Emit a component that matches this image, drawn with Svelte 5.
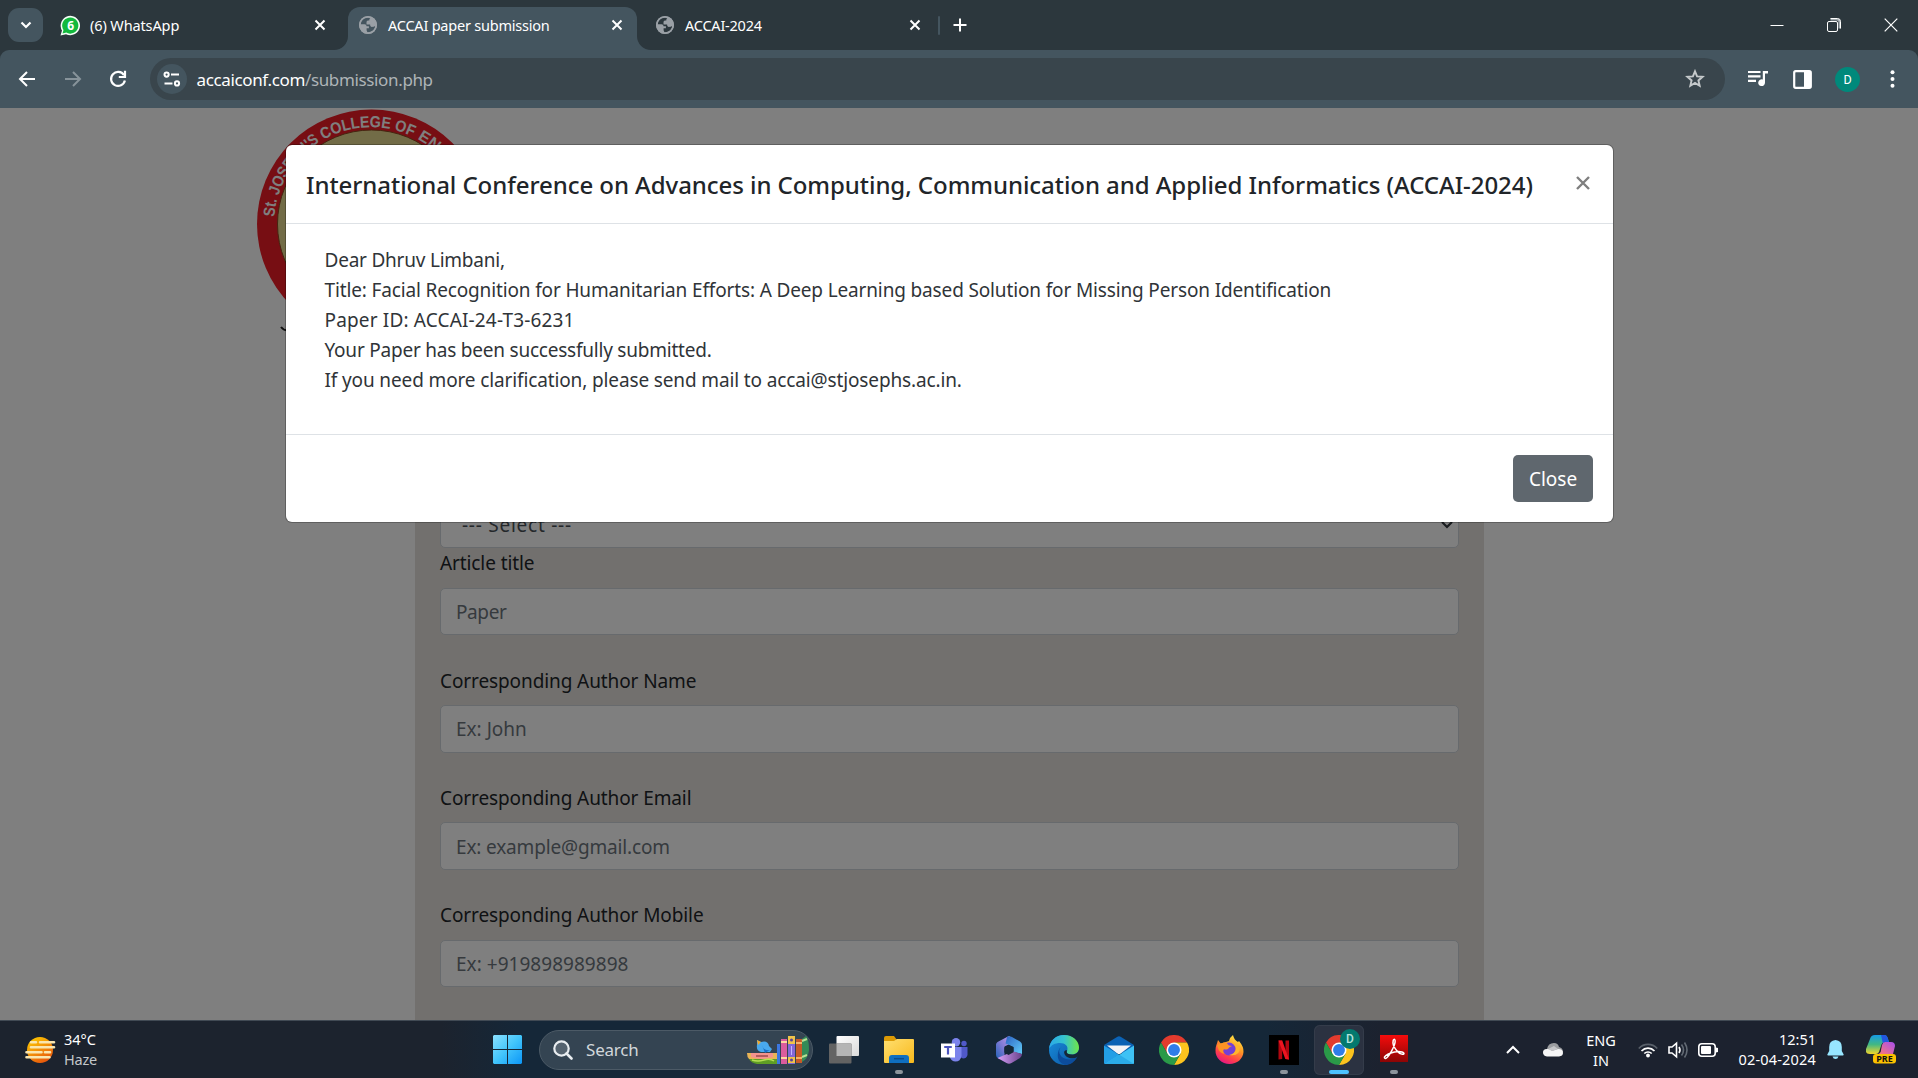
<script>
  const fields = [
    { label: 'Article title', hint: 'Paper' },
    { label: 'Corresponding Author Name', hint: 'Ex: John' },
    { label: 'Corresponding Author Email', hint: 'Ex: example@gmail.com' },
    { label: 'Corresponding Author Mobile', hint: 'Ex: +919898989898' }
  ];
  const message = [
    'Dear Dhruv Limbani,',
    'Title: Facial Recognition for Humanitarian Efforts: A Deep Learning based Solution for Missing Person Identification',
    'Paper ID: ACCAI-24-T3-6231',
    'Your Paper has been successfully submitted.',
    'If you need more clarification, please send mail to accai@stjosephs.ac.in.'
  ];
</script>

{#snippet cross()}
  <svg class="cross" width="12" height="12" viewBox="0 0 12 12"><path d="M1.5 1.5l9 9M10.5 1.5l-9 9" stroke="#fff" stroke-width="2" /></svg>
{/snippet}

{#snippet globe()}
  <svg class="favicon" width="20" height="20" viewBox="0 0 20 20">
    <circle cx="10" cy="10" r="9" fill="#9aa0a6" />
    <path d="M8.5 2.6C5 3.200 2.700 6 2.600 9.300H6.500c1.300 0 2 .9 2 2h2.400v1.900H8.600v2.100l.9 2.100c4.300.2 7.600-2.900 7.900-6.600-1 .9-2 1.100-3.400 1.100-1.300 0-1.900-.7-1.900-2.300H8.500V7.400c0-1.400.8-2 2.200-2h.6c0-1.300.5-2.200 1.300-2.700-1.300-.4-2.700-.4-4.100-.1z" fill="var(--hole)" />
    <circle cx="10" cy="10" r="8.200" fill="none" stroke="#9aa0a6" stroke-width="1.700" />
  </svg>
{/snippet}

{#snippet chrome()}
  <svg width="30" height="30" viewBox="0 0 48 48">
    <path d="M24 12h20.800A24 24 0 0 0 3.200 12l10.400 18z" fill="#e33b2e" />
    <path d="M34.400 30L24 48A24 24 0 0 0 44.800 12H24z" fill="#fcc31e" />
    <path d="M13.600 30L3.200 12A24 24 0 0 0 24 48l10.400-18z" fill="#2a9a48" />
    <circle cx="24" cy="24" r="12" fill="#fff" /><circle cx="24" cy="24" r="9.500" fill="#2f7de9" />
  </svg>
{/snippet}

<div class="screen">
  <div class="tabs">
    <div class="tabsearch"><svg width="12" height="8" viewBox="0 0 12 8"><path d="M1.500 1.500L6 6l4.500-4.500" fill="none" stroke="#fff" stroke-width="2.200" /></svg></div>
    <div class="tab first">
      <svg class="favicon" width="21" height="21" viewBox="0 0 21 21"><path d="M.5 20.500l1.500-5A9.700 9.700 0 1 1 6 19.200z" fill="#f4fff6" /><path d="M2.500 18.600l1-3.600A8.100 8.100 0 1 1 6.300 17.600z" fill="#12b93d" /><text x="10.700" y="15" text-anchor="middle" class="wa">6</text></svg>
      <span class="t1">(6) WhatsApp</span>{@render cross()}
    </div>
    <div class="tab active">
      <svg class="flare left" width="14" height="14" viewBox="0 0 14 14"><path d="M14 0v14H0A14 14 0 0 0 14 0z" fill="#44555f" /></svg>
      {@render globe()}<span class="t2">ACCAI paper submission</span>{@render cross()}
      <svg class="flare right" width="14" height="14" viewBox="0 0 14 14"><path d="M0 0v14h14A14 14 0 0 1 0 0z" fill="#44555f" /></svg>
    </div>
    <div class="tab last">{@render globe()}<span class="t3">ACCAI-2024</span>{@render cross()}</div>
    <i class="sep"></i>
    <svg class="plus" width="14" height="14" viewBox="0 0 14 14"><path d="M7 .5v13M.5 7h13" stroke="#fff" stroke-width="2" /></svg>
    <div class="controls">
      <svg width="14" height="14" viewBox="0 0 14 14"><path d="M.5 7.500h13" stroke="#fff" /></svg>
      <svg width="14" height="14" viewBox="0 0 14 14" fill="none" stroke="#fff"><path d="M3.500 1.500h6.500a2.500 2.500 0 0 1 2.500 2.500v6.500" stroke="#a5adb1" stroke-width="2" /><path d="M3.500.5h7a3 3 0 0 1 3 3v7" /><rect x=".5" y="3.500" width="10" height="10" rx="1.500" fill="#2c373d" /></svg>
      <svg width="14" height="14" viewBox="0 0 14 14"><path d="M.7.7l12.600 12.600M13.300.7L.7 13.300" stroke="#fff" stroke-width="1.200" /></svg>
    </div>
  </div>

  <div class="toolwrap">
  <div class="toolbar">
    <svg class="nav" width="18" height="18" viewBox="0 0 18 18" fill="none" stroke="#fff" stroke-width="2"><path d="M17 9H2.500M9 2L2 9l7 7" /></svg>
    <svg class="nav" width="18" height="18" viewBox="0 0 18 18" fill="none" stroke="#87939a" stroke-width="2"><path d="M1 9h14.500M9 2l7 7-7 7" /></svg>
    <svg class="nav" width="18" height="18" viewBox="0 0 18 18" fill="none" stroke="#fff" stroke-width="2.200"><path d="M15 5.200A7 7 0 1 0 15.900 10.500" /><path d="M16 .8V7H9.800" /></svg>
    <div class="omnibox">
      <span class="site"><svg width="18" height="16" viewBox="0 0 18 16" fill="none" stroke="#fff" stroke-width="2"><circle cx="3.600" cy="3.600" r="2.100" /><path d="M8 3.600h8M1.500 12.400h8" /><circle cx="14" cy="12.400" r="2.100" /></svg></span>
      <span class="url"><b>accaiconf.com</b>/submission.php</span>
      <svg class="star" width="20" height="20" viewBox="0 0 24 24"><path d="M12 2.800l2.500 6.100 6.600.5-5 4.300 1.500 6.500-5.600-3.500-5.600 3.500 1.500-6.500-5-4.300 6.600-.5z" fill="none" stroke="#c5c9cb" stroke-width="2.300" /></svg>
    </div>
    <div class="tools">
      <svg width="20" height="18" viewBox="0 0 20 18"><path d="M0 2h12.500M0 6.400h12.500M0 10.800h8" stroke="#fff" stroke-width="2.200" /><path d="M14.800 1h5.200v2.600h-3v9a3.400 3.400 0 1 1-2.200-3.100z" fill="#fff" /></svg>
      <svg width="19" height="19" viewBox="0 0 19 19"><rect x="1.200" y="1.200" width="16.600" height="16.600" rx="1.500" fill="none" stroke="#fff" stroke-width="2.200" /><path d="M11 1h7v17h-7z" fill="#fff" /></svg>
      <span class="avatar">D</span>
      <svg width="5" height="18" viewBox="0 0 5 18" fill="#fff"><circle cx="2.500" cy="2.200" r="2" /><circle cx="2.500" cy="9" r="2" /><circle cx="2.500" cy="15.800" r="2" /></svg>
    </div>
  </div>
  </div>

  <main class="viewport">
    <div class="page">
      <header>
        <svg class="seal" width="260" height="240" viewBox="0 0 260 240">
          <circle cx="114.500" cy="116" r="114.500" fill="#ee1c26" /><circle cx="114.500" cy="116" r="94" fill="#e5d98f" stroke="#8a4a20" stroke-width="1" />
          <path id="arc" d="M17.200 110A97 97 0 0 1 210.800 110" fill="none" />
          <text class="rimtext"><textPath href="#arc" startOffset="1" textLength="91" lengthAdjust="spacingAndGlyphs">St. JOSEPH'S</textPath></text>
          <text class="rimtext"><textPath href="#arc" startOffset="96" textLength="93" lengthAdjust="spacingAndGlyphs">COLLEGE OF</textPath></text>
          <text class="rimtext"><textPath href="#arc" startOffset="194" textLength="35" lengthAdjust="spacingAndGlyphs">ENG</textPath></text>
          <path d="M24 219q3 4 8 3" fill="none" stroke="#222" stroke-width="2" />
        </svg>
      </header>
      <form class="panel">
        <div class="input select"><span>--- Select ---</span><svg width="12" height="8" viewBox="0 0 12 8"><path d="M1 1l5 5 5-5" fill="none" stroke="#343a40" stroke-width="2.200" /></svg></div>
        {#each fields as f, i}
          <div class="group"><div class="label">{f.label}</div><div class="input f{i}">{f.hint}</div></div>
        {/each}
      </form>
    </div>
    <div class="backdrop">
      <section class="modal">
        <div class="head"><h5>International Conference on Advances in Computing, Communication and Applied Informatics (ACCAI-2024)</h5>
          <svg width="14" height="14" viewBox="0 0 14 14"><path d="M1 1l12 12M13 1L1 13" stroke="#7f7f7f" stroke-width="2.400" /></svg></div>
        <div class="body">{#each message as line, i}<p class="m{i}">{line}</p>{/each}</div>
        <div class="foot"><button>Close</button></div>
      </section>
    </div>
  </main>

  <footer class="taskbar">
    <div class="weather">
      <svg width="31" height="28" viewBox="0 0 31 28"><defs><linearGradient id="sun" x1="0" y1="0" x2=".6" y2="1"><stop offset="0" stop-color="#ffd400" /><stop offset="1" stop-color="#e8590c" /></linearGradient></defs><circle cx="15" cy="14" r="13" fill="url(#sun)" /><path d="M6 6.300h5M15 6.300h14M6 11.300h23M1.500 16.300h15M20 16.300h5M1.500 21.300h23" stroke="#fae6ae" stroke-width="2.600" stroke-linecap="round" /></svg>
      <div class="temp"><p>34°C</p><p class="dim">Haze</p></div>
    </div>
    <svg class="start" width="29" height="29" viewBox="0 0 29 29"><defs><linearGradient id="win" x1="0" y1="0" x2="1" y2="1"><stop offset="0" stop-color="#8be1ff" /><stop offset=".5" stop-color="#42c5fb" /><stop offset="1" stop-color="#0c96f7" /></linearGradient></defs><path d="M1 0h13v14H0V1zM15 0h13l1 1v13H15zM0 15h14v14H1l-1-1zM15 15h14v13l-1 1H15z" fill="url(#win)" /></svg>
    <div class="search">
      <svg width="20" height="20" viewBox="0 0 20 20" fill="none" stroke="#e9edf0" stroke-width="2.200"><circle cx="8.500" cy="8.500" r="7.200" fill="#55636f" /><path d="M13.500 13.500l5 5" stroke-linecap="round" stroke-width="2.600" /></svg>
      <span>Search</span>
      <svg class="books" width="62" height="29" viewBox="0 0 62 29">
        <path d="M0 17h30v6H2q-2-2-2-6z" fill="#e9b456" /><path d="M4 17h22v4q-11 4-22 0z" fill="#f4938c" /><path d="M9 19h12v2H9z" fill="#b25c5c" />
        <path d="M2 23h28v5H10q-6-1-8-5z" fill="#5f9e24" /><path d="M5 24q6 2 12 0t10 1" stroke="#b5df54" fill="none" stroke-width="1.500" />
        <path d="M10 4l4 2q7-2 8 4l3 3-2 3H14q-5-1-4-7z" fill="#49a9ee" /><path d="M10 4l4 2-3 3z" fill="#f2a82b" /><path d="M15 9q1 6 8 5l-5 3z" fill="#1b6fc7" />
        <path d="M30 8h3v20h-3z" fill="#3c78e0" /><path d="M34 3h6v25h-6z" fill="#da5c9d" /><path d="M34 6h6M34 22h6" stroke="#ffd7a0" stroke-width="2" /><path d="M41 0h7v28h-7z" fill="#8367d6" /><path d="M41 0h7v8h-7zM41 21h7v6h-7z" fill="#f0c34a" /><circle cx="44.500" cy="4" r="1.500" fill="#59429b" /><circle cx="44.500" cy="24" r="1.500" fill="#59429b" /><path d="M44 10h1v9h-1z" fill="#c5b2ff" />
        <path d="M49 3h6v24h-6z" fill="#c65a27" /><path d="M49 7h6M49 22h6" stroke="#f3b166" stroke-width="2" /><path d="M55 3l4-3q3 3 3 14-1 9-7 12z" fill="#338b57" /><path d="M55 5l5-2M55 21l5-2" stroke="#b7df94" stroke-width="2" />
      </svg>
    </div>
    <div class="apps">
      <div class="app"><svg width="30" height="28" viewBox="0 0 30 28"><defs><linearGradient id="tv" x1="0" y1="0" x2="1" y2="1"><stop offset="0" stop-color="#fff" /><stop offset="1" stop-color="#dadada" /></linearGradient></defs><rect x="7.500" y="0" width="22.500" height="20" rx="1" fill="url(#tv)" /><rect x="0" y="7.500" width="22.500" height="20" rx="1" fill="#636363" /><path d="M7.500 7.500h15V20h-15z" fill="#b5b5b5" /></svg></div>
      <div class="app run"><svg width="30" height="27" viewBox="0 0 30 27"><defs><linearGradient id="fold" x1="0" y1="0" x2="1" y2="1"><stop offset="0" stop-color="#ffdf70" /><stop offset="1" stop-color="#f8b91c" /></linearGradient></defs><path d="M0 2q0-2 2-2h8l3 4h15v8H0z" fill="#dc9a05" /><path d="M0 5h10l3-2h16q1 0 1 1v22q0 1-1 1H1q-1 0-1-1z" fill="url(#fold)" /><path d="M5 27v-5q0-3 3-3h14q3 0 3 3v5z" fill="#0f6fc0" /><path d="M10 22.700h10" stroke="#0b4c8c" stroke-width="1.500" /></svg></div>
      <div class="app"><svg width="27" height="24" viewBox="0 0 27 24"><circle cx="23" cy="5.500" r="2.700" fill="#5059c9" /><circle cx="15" cy="4.300" r="4.200" fill="#7b83eb" /><path d="M19 9h7.500v8q-1 3.500-4.500 3.500l-3-1.500z" fill="#5059c9" /><path d="M9 9h11.500v9q-1 5.500-6 5.500-4 0-5.500-4z" fill="#7b83eb" /><path d="M0 5.500h14v14H0z" fill="#fff" /><path d="M3.200 9h7.600M7 9v7.500" stroke="#4c55bd" stroke-width="2.200" /></svg></div>
      <div class="app"><svg width="26" height="28" viewBox="0 0 26 28"><defs><linearGradient id="ma" x1="0" y1="1" x2="1" y2="0"><stop offset="0" stop-color="#2563b8" /><stop offset=".5" stop-color="#7f7bd6" /><stop offset="1" stop-color="#c49be9" /></linearGradient><linearGradient id="mb" x1="0" y1="0" x2="1" y2="1"><stop offset="0" stop-color="#2c62c4" /><stop offset="1" stop-color="#62cdf9" /></linearGradient><linearGradient id="mc"><stop offset="0" stop-color="#d8a2fb" /><stop offset="1" stop-color="#69418a" /></linearGradient></defs>
        <path d="M11 1Q12.500 0 14 .5L15 7.500 8.500 10.500V19.500L2.500 22.500Q0 21.500 0 19V8.500Q0 7 1.500 6z" fill="url(#ma)" />
        <path d="M11 1Q13-.5 16 1L24 5.500Q26 6.700 26 9V18L17.500 16V11L9.500 7.500z" fill="url(#mb)" />
        <path d="M1.500 22L9 18.800 17.500 15.500 26 18Q26 20.500 24 22L15.500 27Q13 28.500 10.500 27z" fill="url(#mc)" />
        <path d="M12.500 8.800l5 2.500v5L12.500 19l-4.200-2.500v-5z" fill="#152738" /></svg></div>
      <div class="app"><svg width="30" height="30" viewBox="0 0 30 30"><defs><linearGradient id="ea"><stop offset="0" stop-color="#2aa9e9" /><stop offset=".5" stop-color="#35c2ce" /><stop offset="1" stop-color="#6fe548" /></linearGradient><linearGradient id="eb" x1="0" y1="0" x2="1" y2="1"><stop offset="0" stop-color="#1991df" /><stop offset="1" stop-color="#0b52a0" /></linearGradient></defs><circle cx="15" cy="15" r="15" fill="url(#eb)" /><path d="M0 14C1 5 7 0 15 0c9 0 15 6 15 12.500 0 5-4 7-7 7-5 0-6-1.500-5-3.500 2-5-2-8-7-8C6 8 2 10 0 14z" fill="url(#ea)" /><path d="M13 11.500c-5 3-3 10.500 4 12.500 4 1 7.500 0 10.500-1.500C25 27.500 21 30 16 30c-6-2-8-7-7-12 .5-3.500 2-5.500 4-6.500z" fill="#0c4c9c" /><path d="M18.200 15.500c-1.300 2.500 0 4 5 4 3 0 6-1.500 7-5.500 1 3 .3 6-2 8.300-5 2.200-12 .7-13-4.300-.3-2 1-3.500 3-2.500z" fill="#152738" /></svg></div>
      <div class="app"><svg width="30" height="28" viewBox="0 0 30 28"><path d="M0 9l13-8q2-1.500 4 0l13 8-6 8H6z" fill="#0b62b4" /><path d="M3 9.500h24L16 18h-2z" fill="#f4f4f6" /><path d="M0 9.500L30 28H1q-1 0-1-1z" fill="#239fe6" /><path d="M30 9.500L4 26l-3 2h28q1 0 1-1z" fill="#3ec2f5" /><path d="M15 18.500L30 28H1z" fill="#2bace9" /></svg></div>
      <div class="app">{@render chrome()}</div>
      <div class="app"><svg width="29" height="29" viewBox="0 0 29 29"><defs><linearGradient id="fx" x1=".8" y1="0" x2=".3" y2="1"><stop offset="0" stop-color="#fff04a" /><stop offset=".4" stop-color="#ff9c23" /><stop offset=".75" stop-color="#ff3f4b" /><stop offset="1" stop-color="#e31587" /></linearGradient></defs><path d="M3 5l3 4q2-2 5-2l3-1q1-4 4-6 1 5 5 7l1-1q5 6 4.500 11C28 24 22 29 14.500 29 7 29 0 23 .5 15 .5 11 2 9 3 5z" fill="url(#fx)" /><circle cx="14" cy="14" r="6.500" fill="#7440d6" /><path d="M2 10q5-3 10-2 1 3 5 3-3 1-4 3-3 1-4 0-2 3 1 5-6-1-7-6z" fill="#ff9323" /><path d="M17 8q4 2 4 6-1 5-7 6 11 2 11-8z" fill="#ffb62d" /></svg></div>
      <div class="app run"><svg width="30" height="30" viewBox="0 0 30 30"><path d="M0 0h30v30H0z" fill="#000" /><path d="M9.500 5.500h3.700V24l-3.700.5zM16.500 5.500H20v19l-3.500-.5z" fill="#b1060f" /><path d="M9.500 5.500h3.700L20 24.500l-3.700-.5z" fill="#ed1420" /></svg></div>
      <div class="app current">{@render chrome()}<b class="badge">D</b></div>
      <div class="app run adobe"><svg width="28" height="27" viewBox="0 0 28 27"><defs><linearGradient id="pdf" x1="0" y1="0" x2="0" y2="1"><stop offset="0" stop-color="#f50c0c" /><stop offset="1" stop-color="#8c0505" /></linearGradient></defs><path d="M0 0h28v27H0z" fill="url(#pdf)" /><path d="M4.500 22c2-3 6-4 10-5 4-.8 9-.5 9.500 1.500.3 1.500-4 1-7-2.500-3-3.500-4.500-8-3.800-10.500.6-2 2.300-1.300 1.900 1.500C14.500 12 9 21 6.500 23c-1 .8-2.500.3-2-1z" fill="none" stroke="#fff" stroke-width="1.500" /></svg></div>
    </div>
    <div class="tray">
      <svg class="up" width="14" height="9" viewBox="0 0 14 9"><path d="M1 8l6-6 6 6" fill="none" stroke="#fff" stroke-width="2" /></svg>
      <svg class="cloud" width="20" height="14" viewBox="0 0 20 14"><path d="M4 12Q0 12 0 9t4-3q1-6 7-6 4 0 5 4 4 1 4 5l-8 3z" fill="#9b9da0" /><path d="M0 9q1-3 4-3 3-.5 5 2l6-2q5 0 5 4 0 3-4 3.500H4Q0 13 0 9z" fill="#f6f6f6" /><path d="M9 8l6-2-4-3-6 3z" fill="#c5c6c8" /></svg>
      <div class="lang"><p>ENG</p><p>IN</p></div>
      <svg class="wifi" width="20" height="16" viewBox="0 0 20 16" fill="none" stroke-width="1.700"><path d="M.8 6.500a12.500 12.500 0 0 1 18.400 0" stroke="#59606a" /><path d="M3.500 9a9 9 0 0 1 13 0M6.300 11.500a5.300 5.300 0 0 1 7.400 0" stroke="#fff" /><circle cx="10" cy="13.500" r="1.900" fill="#fff" /></svg>
      <svg class="vol" width="20" height="18" viewBox="0 0 20 18" fill="none" stroke="#fff" stroke-width="1.600"><path d="M1 6v6h3l4.500 3.800V2.200L4 6z" /><path d="M11 6q2 3 0 6" /><path d="M13.500 3.500q4 5.500 0 11M16.500 1.500q5 7.500 0 15" stroke="#626a74" /></svg>
      <svg class="bat" width="20" height="14" viewBox="0 0 20 14"><rect x=".8" y=".8" width="16.400" height="12.400" rx="3" fill="none" stroke="#fff" stroke-width="1.600" /><rect x="3" y="3" width="10" height="8" rx="1" fill="#fff" /><path d="M18 4.500l2 .5v4l-2 .5z" fill="#fff" /></svg>
      <div class="clock"><p>12:51</p><p class="date">02-04-2024</p></div>
      <svg class="bell" width="17" height="19" viewBox="0 0 17 19" fill="#97e6ff"><path d="M8.500 0q6.300.5 6.300 7v4l1.900 3.500q0 1-.9 1H1.200q-.9 0-.9-1L2.200 11V7q0-6.500 6.300-7zM5.500 16.500h6q-.8 2.500-3 2.500t-3-2.500z" /></svg>
      <svg class="copilot" width="30" height="29" viewBox="0 0 30 29"><defs><linearGradient id="ca" x1="0" y1="0" x2="0" y2="1"><stop offset="0" stop-color="#159be5" /><stop offset=".5" stop-color="#42b883" /><stop offset="1" stop-color="#f2d52b" /></linearGradient><linearGradient id="cb" x1="1" y1="0" x2="0" y2="1"><stop offset="0" stop-color="#a54df0" /><stop offset="1" stop-color="#ff7a74" /></linearGradient></defs><path d="M9 0h9q3 0 4 4l1 3h-4q-3 0-4 4l-2 6q-1 2-3 2H4q-5 0-4-5L4 4q1-4 5-4z" fill="url(#ca)" /><path d="M15 0h4q2 0 3 4l1 3h-4l-2 2z" fill="#2257df" /><path d="M19 7h6q4 0 4 4l-2 8H12q3-1 3-4l1-5q1-3 3-3z" fill="url(#cb)" /><rect x="7" y="19" width="23" height="9.500" rx="3" fill="#fcc100" /><text x="18.500" y="26.800" text-anchor="middle" class="pre">PRE</text></svg>
    </div>
  </footer>
</div>

<style>
  :global(body) { overflow: hidden; }
  .screen { width: 1918px; height: 1078px; display: flex; flex-direction: column; overflow: hidden; font-family: "Noto Sans", "Open Sans", sans-serif; }
  .screen :global(svg) { display: block; flex: none; }
  p, h5 { margin: 0; }
  span, p, .label { white-space: nowrap; }

  .tabs { height: 50px; flex: none; display: flex; align-items: center; background: #2c373d; color: #fff; font-size: 14.500px; }
  .tabsearch { width: 35px; height: 34px; margin-left: 8px; border-radius: 11px; background: #44555f; display: grid; place-items: center; }
  .tab { display: flex; align-items: center; box-sizing: border-box; --hole: #2c373d; }
  .tab .cross { margin-left: auto; }
  .tab span { margin-left: 10px; }
  .tab .t1 { margin-left: 9px; }
  .first { width: 305px; padding: 0 22px 0 17px; }
  .active { position: relative; width: 289px; height: 43px; align-self: flex-end; padding: 0 14px 7px 10px; border-radius: 12px 12px 0 0; background: #44555f; --hole: #44555f; }
  .flare { position: absolute; bottom: 0; }
  .left { left: -14px; }
  .right { right: -14px; }
  .last { width: 300px; padding: 0 16px 0 18px; }
  .sep { width: 2px; height: 19px; background: #44555f; border-radius: 1px; margin-left: 1px; }
  .plus { margin-left: 13px; }
  .controls { margin-left: auto; margin-right: 20px; display: flex; gap: 43px; }
  .wa { font: bold 12px "Noto Sans", sans-serif; fill: #fff; }
  .t1 { letter-spacing: -0.120px; }
  .t2, .t3 { letter-spacing: -0.220px; }

  .toolwrap { flex: none; background: #2c373d; }
  .toolbar { height: 58px; background: #44555f; border-radius: 9px 9px 0 0; display: flex; align-items: center; padding: 0 23px 0 18px; box-sizing: border-box; }
  .nav { margin-right: 28px; }
  .nav:nth-child(2) { margin-right: 27px; }
  .nav:nth-child(3) { margin-right: 23px; }
  .omnibox { width: 1575px; height: 42px; box-sizing: border-box; border-radius: 21px; background: #39454c; display: flex; align-items: center; padding: 0 20px 0 7px; }
  .site { width: 30px; height: 30px; border-radius: 50%; background: #44555f; display: grid; place-items: center; }
  .url { margin-left: 9.500px; font-size: 17px; color: #aeb4b7; letter-spacing: -0.360px; }
  .url b { font-weight: 400; color: #fff; }
  .star { margin-left: auto; }
  .tools { margin-left: auto; display: flex; align-items: center; }
  .tools > :nth-child(2) { margin-left: 25px; }
  .avatar { width: 25px; height: 25px; margin: 0 30px 0 23px; border-radius: 50%; background: #00897b; color: #fff; font: 12.500px/25px Roboto, sans-serif; text-align: center; }

  .viewport { position: relative; height: 912px; flex: none; overflow: hidden; background: #fff; font-size: 19px; line-height: 30px; color: #212529; }
  header { height: 292px; padding-left: 256.500px; }
  .seal { overflow: visible; }
  .rimtext { font: bold 16px "Liberation Sans", sans-serif; fill: #fff; }
  .panel { width: 1069px; height: 640px; margin-left: 415px; padding: 100.200px 25px 0; box-sizing: border-box; background: #e5e1dd; }
  .label { margin-bottom: 10px; color: #212529; letter-spacing: -0.100px; }
  .label:first-child { padding-top: .500px; margin-bottom: 9.500px; }
  .group { margin-bottom: 29.900px; }
  .input { height: 47.500px; box-sizing: border-box; border: 1px solid #ced4da; border-radius: 5px; background: #fff; display: flex; align-items: center; padding: 1px 15px 0; color: #6c757d; }
  .f0 { letter-spacing: -0.400px; padding-top: 2px; }
  .f2 { letter-spacing: -0.160px; }
  .f3 { letter-spacing: 0.030px; }
  .select { color: #495057; padding: 2px 5px 0 21px; justify-content: space-between; letter-spacing: .750px; }
  .backdrop { position: absolute; inset: 0; background: rgba(0, 0, 0, .5); }
  .modal { width: 1327px; height: 377px; margin: 37px 0 0 286px; box-sizing: border-box; border-radius: 6px; background: #fff; box-shadow: 0 0 0 1px rgba(0, 0, 0, .25); display: flex; flex-direction: column; }
  .head { height: 79px; box-sizing: border-box; border-bottom: 1px solid #dee2e6; display: flex; justify-content: space-between; align-items: center; padding: 0 23px 2px 20px; }
  h5 { padding-top: 2px; font-size: 24px; line-height: 37px; font-weight: 500; white-space: nowrap; letter-spacing: -0.062px; }
  .body { flex: 1; padding: 21px 38px 0 38.500px; color: #303438; }
  .m0, .m3 { letter-spacing: -0.220px; }
  .m1 { letter-spacing: -0.145px; }
  .m4 { letter-spacing: -0.130px; }
  .m2 { letter-spacing: .160px; }
  .foot { height: 88px; box-sizing: border-box; border-top: 1px solid #dee2e6; display: flex; align-items: center; justify-content: flex-end; padding-right: 20px; }
  button { width: 80px; height: 47px; padding: 1px 0 0; border: 0; border-radius: 5px; background: #5f676e; color: #fff; font: 19px "Noto Sans", sans-serif; }

  .taskbar { height: 58px; flex: none; box-sizing: border-box; border-top: 1px solid #414a54; background: linear-gradient(90deg, #1c232e 23%, #152738 27%, #152738 66%, #1c222f 72%); display: flex; align-items: center; color: #fff; font-size: 14.500px; line-height: 20px; }
  .weather { width: 468px; display: flex; gap: 8px; padding-left: 25px; box-sizing: border-box; align-items: center; }
  .temp, .clock { padding-bottom: 2px; }
  .dim { color: #c4c7ca; letter-spacing: -0.200px; }
  .start { margin-left: 25px; }
  .search { width: 274px; height: 40px; margin-left: 17px; box-sizing: border-box; border: 1px solid #4c5a66; border-radius: 20px; background: #344452; display: flex; align-items: center; padding: 1px 3px 0 13px; font-size: 17px; color: #d2d7db; letter-spacing: -0.200px; }
  .search span { margin-left: 13px; }
  .books { margin-left: auto; }
  .apps { display: flex; margin-left: 3.500px; }
  .app { position: relative; width: 55px; height: 50px; display: grid; place-items: center; }
  .run::after { content: ""; position: absolute; left: 23.500px; bottom: 1px; width: 8px; height: 4px; border-radius: 2px; background: #8c949c; }
  .adobe { box-sizing: border-box; padding-bottom: 3px; }
  .current { width: 50px; margin: 0 2.500px; border-radius: 6px; background: #2b3241; box-shadow: inset 0 0 0 1px #343c4a; }
  .current::after { content: ""; position: absolute; left: 15px; bottom: 1px; width: 20px; height: 4px; border-radius: 2px; background: #4cc2ff; }
  .badge { position: absolute; left: 26px; top: 4px; width: 20px; height: 20px; border-radius: 50%; background: #04796e; color: #b5e3dc; font: 500 12px/20px Roboto, sans-serif; text-align: center; }
  .tray { flex: 1; display: flex; align-items: center; }
  .up { margin-left: 84.500px; }
  .cloud { margin-left: 23px; }
  .lang { width: 40px; text-align: center; margin-left: 18px; }
  .wifi { margin-left: 17px; }
  .vol { margin-left: 10px; }
  .bat { margin-left: 10px; }
  .clock { width: 98px; text-align: right; }
  .date { letter-spacing: .180px; }
  .bell { margin-left: 11px; }
  .copilot { margin-left: 22px; }
  .pre { font: bold 9px "Noto Sans", sans-serif; fill: #111; }
</style>
